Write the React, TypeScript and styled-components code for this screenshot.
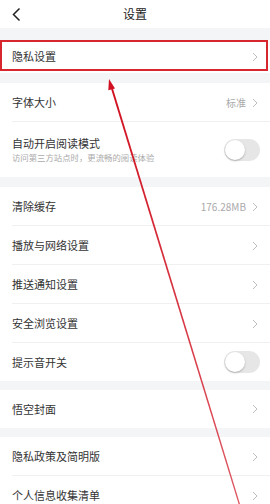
import React from "react";
import styled, { createGlobalStyle } from "styled-components";

const Global = createGlobalStyle`
  html, body { margin: 0; padding: 0; background: #fff; }
  body { font-family: "Noto Sans CJK SC", "Noto Sans", sans-serif; -webkit-font-smoothing: antialiased; }
  * { box-sizing: border-box; }
`;

const Page = styled.div`
  position: relative;
  width: 270px;
  height: 504px;
  overflow: hidden;
  background: #f4f5f7;
  display: flex;
  flex-direction: column;
`;

const Header = styled.div`
  height: 28px;
  flex-shrink: 0;
  background: #fff;
  display: flex;
  align-items: center;
  justify-content: center;
  position: relative;
`;

const BackBtn = styled.div`
  position: absolute;
  left: 11px;
  top: 7px;
  width: 12px;
  height: 15px;
  display: flex;
`;

const Title = styled.div`
  font-size: 12px;
  color: #222;
  line-height: 1;
`;

const Gap = styled.div<{ $h: number }>`
  height: ${(p) => p.$h}px;
  flex-shrink: 0;
`;

const Group = styled.div`
  background: #fff;
  flex-shrink: 0;
  display: flex;
  flex-direction: column;
`;

const Row = styled.div<{ $h?: number; $divider?: boolean; $highlight?: boolean }>`
  position: relative;
  height: ${(p) => p.$h ?? 39}px;
  flex-shrink: 0;
  display: flex;
  align-items: center;
  padding: 0 11px 0 12px;
  background: #fff;
  ${(p) =>
    p.$divider
      ? `&::before { content: ""; position: absolute; left: 12px; right: 0; bottom: 0; height: 1px; background: #f0f0f0; }`
      : ""}
  ${(p) =>
    p.$highlight
      ? `&::after { content: ""; position: absolute; left: 0; right: 2px; top: 0; bottom: 2px; border: 2px solid #d7262e; }`
      : ""}
`;

const Texts = styled.div`
  flex: 1;
  display: flex;
  flex-direction: column;
  gap: 4px;
`;

const Label = styled.div`
  font-size: 11px;
  color: #333;
  line-height: 1.1;
`;

const Sub = styled.div`
  font-size: 8.4px;
  color: #aaa;
  line-height: 1.1;
  white-space: nowrap;
`;

const Value = styled.div`
  font-size: 10px;
  color: #aaa;
  margin-right: 6px;
`;

const Chevron = styled.svg`
  width: 6px;
  height: 10px;
  flex-shrink: 0;
  margin-right: 1px;
`;

const Toggle = styled.div`
  width: 36px;
  height: 22px;
  border-radius: 11px;
  background: #e6e6e6;
  position: relative;
  flex-shrink: 0;
  margin-right: -1px;
`;

const Knob = styled.div`
  position: absolute;
  left: 1px;
  top: 1px;
  width: 20px;
  height: 20px;
  border-radius: 50%;
  background: #fff;
  box-shadow: 0 1px 2px rgba(0, 0, 0, 0.25);
`;

const Overlay = styled.svg`
  position: absolute;
  left: 0;
  top: 0;
  width: 270px;
  height: 504px;
  pointer-events: none;
`;

const Arrow = () => (
  <Chevron viewBox="0 0 6 10">
    <path d="M1 1 L5 5 L1 9" fill="none" stroke="#bdbdbd" strokeWidth="1" />
  </Chevron>
);

type Item = {
  label: string;
  sub?: string;
  value?: string;
  toggle?: boolean;
  h?: number;
  highlight?: boolean;
};

const SettingRow = ({ item, divider }: { item: Item; divider: boolean }) => (
  <Row $h={item.h} $divider={divider} $highlight={item.highlight}>
    <Texts>
      <Label>{item.label}</Label>
      {item.sub && <Sub>{item.sub}</Sub>}
    </Texts>
    {item.value && <Value>{item.value}</Value>}
    {item.toggle ? (
      <Toggle>
        <Knob />
      </Toggle>
    ) : (
      <Arrow />
    )}
  </Row>
);

const groups: { gap: number; items: Item[] }[] = [
  { gap: 12, items: [{ label: "隐私设置", h: 33, highlight: true }] },
  {
    gap: 10,
    items: [
      { label: "字体大小", value: "标准" },
      { label: "自动开启阅读模式", sub: "访问第三方站点时，更流畅的阅读体验", toggle: true, h: 55 },
    ],
  },
  {
    gap: 10,
    items: [
      { label: "清除缓存", value: "176.28MB" },
      { label: "播放与网络设置" },
      { label: "推送通知设置" },
      { label: "安全浏览设置" },
      { label: "提示音开关", toggle: true, h: 38 },
    ],
  },
  { gap: 9, items: [{ label: "悟空封面", h: 38 }] },
  {
    gap: 9,
    items: [{ label: "隐私政策及简明版" }, { label: "个人信息收集清单" }],
  },
];

export default function App() {
  return (
    <>
      <Global />
      <Page>
        <Header>
          <BackBtn>
            <svg width="12" height="15" viewBox="0 0 12 15">
              <path d="M8.5 1.5 L2.5 7.5 L8.5 13.5" fill="none" stroke="#222" strokeWidth="1.5" />
            </svg>
          </BackBtn>
          <Title>设置</Title>
        </Header>
        {groups.map((g, gi) => (
          <React.Fragment key={gi}>
            <Gap $h={g.gap} />
            <Group>
              {g.items.map((it, i) => (
                <SettingRow key={it.label} item={it} divider={i < g.items.length - 1 && !it.highlight} />
              ))}
            </Group>
          </React.Fragment>
        ))}
        <Overlay viewBox="0 0 270 504">
          <defs>
            <linearGradient id="fade" x1="0" y1="0" x2="0" y2="1">
              <stop offset="0" stopColor="#d01020" stopOpacity="1" />
              <stop offset="1" stopColor="#d01020" stopOpacity="0.7" />
            </linearGradient>
          </defs>
          <polygon points="110.8,88 112.8,88 240,504 238.6,504" fill="url(#fade)" />
          <polygon points="109,79 115,88.5 108.3,90.3" fill="#d01020" />
        </Overlay>
      </Page>
    </>
  );
}
